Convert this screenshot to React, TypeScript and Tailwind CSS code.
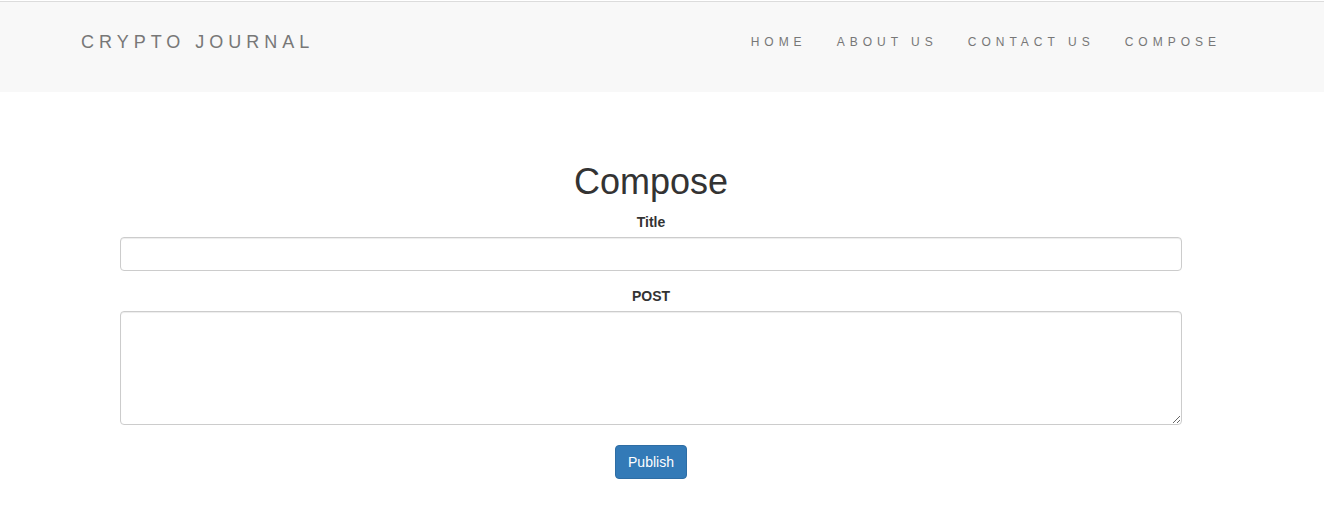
const NAV = ["HOME", "ABOUT US", "CONTACT US", "COMPOSE"];

export default function App() {
  return (
    <div className="min-h-screen bg-white font-['Liberation_Sans',Arial,sans-serif] text-[14px] text-[#333]">
      {/* Navbar */}
      <header className="mt-px flex h-[91px] items-start justify-between border-t border-[#dcdcdc] bg-[#f8f8f8] pl-[66px] pr-[88px] pt-[30px]">
        <a className="px-[15px] text-[18px] leading-[20px] tracking-[5px] text-[#777]">CRYPTO JOURNAL</a>
        <nav className="flex">
          {NAV.map((item) => (
            <a key={item} className="px-[15px] text-[12px] leading-[20px] tracking-[5px] text-[#777]">
              {item}
            </a>
          ))}
        </nav>
      </header>

      {/* Compose form */}
      <main className="ml-[120px] w-[1062px] pt-[70px]">
        <h1 className="mb-[10px] text-center text-[36px] leading-[40px] font-normal text-[#333]">Compose</h1>
        <form className="flex flex-col">
          <label className="mb-[5px] text-center text-[14px] leading-[20px] font-bold">Title</label>
          <input
            type="text"
            className="mb-[15px] h-[34px] rounded-[4px] border border-[#ccc] px-3 shadow-[inset_0_1px_1px_rgba(0,0,0,0.075)] outline-none"
          />
          <label className="mb-[5px] text-center text-[14px] leading-[20px] font-bold">POST</label>
          <textarea className="h-[114px] rounded-[4px] border border-[#ccc] px-3 py-1.5 shadow-[inset_0_1px_1px_rgba(0,0,0,0.075)] outline-none" />
          <div className="mt-[20px] flex justify-center">
            <button
              type="button"
              className="h-[34px] rounded-[4px] border border-[#2e6da4] bg-[#337ab7] px-3 text-[14px] leading-[20px] text-white"
            >
              Publish
            </button>
          </div>
        </form>
      </main>
    </div>
  );
}
